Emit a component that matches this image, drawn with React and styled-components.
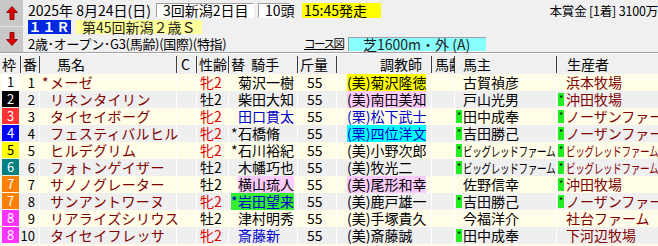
import React from "react";
import styled, { createGlobalStyle } from "styled-components";

const GlobalStyle = createGlobalStyle`
  body {
    margin: 0;
    background: #f0f0f0;
    font-family: "Noto Sans CJK JP", "Noto Sans", sans-serif;
    color: #000;
  }
`;

const COLS = "21px 19px 137px 20px 32px 69px 39px 95px 23px 102px 101px";

const FRAME = {
  1: ["#ffffff", "#000"],
  2: ["#000000", "#fff"],
  3: ["#ff3333", "#fff"],
  4: ["#0000ff", "#fff"],
  5: ["#ffff00", "#000"],
  6: ["#008080", "#fff"],
  7: ["#ff8000", "#fff"],
  8: ["#ff33ff", "#fff"],
};

const BIG = "ビッグレッドファーム";

const horses = [
  { f: 1, n: 1, name: "メーゼ", mark: true, sex: "牝2", jockey: "菊沢一樹", trainer: "(美)菊沢隆徳", tbg: "#ffff00", owner: "古賀禎彦", breeder: "浜本牧場" },
  { f: 2, n: 2, name: "リネンタイリン", sex: "牡2", jockey: "柴田大知", trainer: "(美)南田美知", tbg: "#ffccff", owner: "戸山光男", breeder: "沖田牧場", bm: true },
  { f: 3, n: 3, name: "タイセイボーグ", sex: "牝2", jockey: "田口貫太", jc: "#0000cc", trainer: "(栗)松下武士", owner: "田中成奉", om: true, breeder: "ノーザンファーム", bm: true },
  { f: 4, n: 4, name: "フェスティバルヒル", sex: "牝2", jockey: "石橋脩", jm: true, trainer: "(栗)四位洋文", tbg: "#00ffff", owner: "吉田勝己", om: true, breeder: "ノーザンファーム", bm: true },
  { f: 5, n: 5, name: "ヒルデグリム", sex: "牝2", jockey: "石川裕紀", jm: true, trainer: "(美)小野次郎", owner: BIG, om: true, breeder: BIG, bm: true },
  { f: 6, n: 6, name: "フォトンゲイザー", sex: "牡2", jockey: "木幡巧也", trainer: "(美)牧光二", owner: BIG, om: true, breeder: BIG, bm: true },
  { f: 7, n: 7, name: "サノノグレーター", sex: "牡2", jockey: "横山琉人", jbg: "#ffccff", trainer: "(美)尾形和幸", tbg: "#ffccff", owner: "佐野信幸", breeder: "沖田牧場", bm: true },
  { f: 7, n: 8, name: "サンアントワーヌ", sex: "牝2", jockey: "岩田望来", jm: true, jbg: "#33ee33", jc: "#0000cc", trainer: "(美)鹿戸雄一", owner: "吉田勝己", om: true, breeder: "ノーザンファーム", bm: true },
  { f: 8, n: 9, name: "リアライズシリウス", sex: "牡2", jockey: "津村明秀", trainer: "(美)手塚貴久", owner: "今福洋介", breeder: "社台ファーム" },
  { f: 8, n: 10, name: "タイセイフレッサ", sex: "牝2", jockey: "斎藤新", jc: "#0000cc", trainer: "(美)斎藤誠", owner: "田中成奉", om: true, breeder: "下河辺牧場" },
];

const ArrowUp = () => (
  <svg width="12" height="14" viewBox="0 0 12 14">
    <polygon points="6,0.5 11.5,6.5 8,6.5 8,13.5 4,13.5 4,6.5 0.5,6.5" fill="#e00000" stroke="#7a0000" strokeWidth="0.8" />
  </svg>
);

const ArrowDown = () => (
  <svg width="12" height="14" viewBox="0 0 12 14">
    <polygon points="6,13.5 11.5,7.5 8,7.5 8,0.5 4,0.5 4,7.5 0.5,7.5" fill="#e00000" stroke="#7a0000" strokeWidth="0.8" />
  </svg>
);

const App = () => {
  return (
    <Page>
      <GlobalStyle />
      <Top>
        <Arrows>
          <ArrowBtn>
            <ArrowUp />
          </ArrowBtn>
          <ArrowBtn>
            <ArrowDown />
          </ArrowBtn>
        </Arrows>
        <Info>
          <InfoRow>
            <DateText>2025年 8月24日(日)</DateText>
            <Field w={98}>3回新潟2日目</Field>
            <Field w={32}>10頭</Field>
            <Post>15:45発走</Post>
            <Prize>本賞金 [1着] 3100万</Prize>
          </InfoRow>
          <InfoRow>
            <RaceNo>１１Ｒ</RaceNo>
            <RaceName>第45回新潟２歳Ｓ</RaceName>
          </InfoRow>
          <InfoRow>
            <Conditions>2歳･オープン･G3(馬齢)(国際)(特指)</Conditions>
            <CourseLink>コース図</CourseLink>
            <CourseBox>芝1600m・外 (A)</CourseBox>
          </InfoRow>
        </Info>
      </Top>

      <Header>
        <HeadCell pl={2}>枠</HeadCell>
        <HeadCell pl={2}>番</HeadCell>
        <HeadCell pl={17}>馬名</HeadCell>
        <HeadCell pl={4}>C</HeadCell>
        <HeadCell pl={2}>性齢</HeadCell>
        <HeadCell pl={2}>替&nbsp;&nbsp;騎手</HeadCell>
        <HeadCell pl={2}>斤量</HeadCell>
        <HeadCell pl={43}>調教師</HeadCell>
        <HeadCell pl={3} clip>馬齢</HeadCell>
        <HeadCell pl={8}>馬主</HeadCell>
        <HeadCell pl={10} last>生産者</HeadCell>
      </Header>

      {horses.map((h, i) => (
        <Row key={h.n} odd={i % 2 === 0}>
          <FrameCell>
            <FrameBox bg={FRAME[h.f][0]} fg={FRAME[h.f][1]}>{h.f}</FrameBox>
          </FrameCell>
          <NumCell>{h.n}</NumCell>
          <NameCell>
            <Slot w={8}>{h.mark ? "*" : ""}</Slot>
            {h.name}
          </NameCell>
          <Cell />
          <SexCell female={h.sex === "牝2"}>{h.sex}</SexCell>
          <Cell pl={2}>
            {!h.jm && <Slot w={7} />}
            <Tag bg={h.jbg} fg={h.jc}>
              {h.jm && <Slot w={7}>*</Slot>}
              {h.jockey}
            </Tag>
          </Cell>
          <Cell pl={9}>55</Cell>
          <Cell pl={10}>
            <Tag bg={h.tbg} fg={h.trainer.startsWith("(栗)") ? "#0000cc" : undefined}>
              {h.trainer}
            </Tag>
          </Cell>
          <Cell />
          <Cell pl={1} clip>
            <Slot w={7}>{h.om && <Star>*</Star>}</Slot>
            {h.owner === BIG ? <Narrow>{h.owner}</Narrow> : h.owner}
          </Cell>
          <BreederCell clip>
            <Slot w={8}>{h.bm && <Star>*</Star>}</Slot>
            {h.breeder === BIG ? <Narrow>{h.breeder}</Narrow> : h.breeder}
          </BreederCell>
        </Row>
      ))}
    </Page>
  );
};

const Page = styled.div`
  width: 658px;
  height: 246px;
  overflow: hidden;
  background: #fffce8;
`;

const Top = styled.div`
  display: flex;
  height: 52px;
  background: #f0f0f0;
  border-bottom: 1px solid #a0a0a0;
`;

const Arrows = styled.div`
  width: 23px;
  flex-shrink: 0;
  display: flex;
  flex-direction: column;
  background: #c8c8c8;
`;

const ArrowBtn = styled.div`
  flex: 1;
  display: flex;
  align-items: center;
  justify-content: center;
  border-bottom: 1px solid #e4e4e4;
  &:last-child {
    border-bottom: none;
  }
`;

const Info = styled.div`
  flex: 1;
  min-width: 0;
  padding: 2px 0 0 5px;
  display: flex;
  flex-direction: column;
`;

const InfoRow = styled.div`
  height: 17px;
  display: flex;
  align-items: center;
  font-size: 14px;
  line-height: 15px;
  white-space: nowrap;
  & > * {
    flex-shrink: 0;
  }
`;

const DateText = styled.span`
  width: 128px;
`;

const Field = styled.span`
  box-sizing: border-box;
  width: ${(p) => p.w}px;
  height: 15px;
  margin-right: 4px;
  padding-left: 6px;
  background: #fff;
  border: 1px solid;
  border-color: #a0a0a0 #fff #fff #a0a0a0;
  line-height: 13px;
`;

const Post = styled.span`
  width: 79px;
  height: 15px;
  margin-left: 8px;
  padding-left: 2px;
  box-sizing: border-box;
  background: #ffff00;
`;

const Prize = styled.span`
  margin-left: auto;
  font-size: 12.5px;
  letter-spacing: -0.2px;
`;

const RaceNo = styled.span`
  width: 43px;
  height: 14px;
  line-height: 14px;
  background: #0028e0;
  color: #fff;
  font-weight: bold;
  font-size: 13px;
  letter-spacing: 1px;
  text-align: center;
`;

const RaceName = styled.span`
  width: 126px;
  height: 14px;
  line-height: 14px;
  margin-left: 5px;
  padding-left: 6px;
  box-sizing: border-box;
  background: #ffff99;
  color: #222;
`;

const Conditions = styled.span`
  width: 276px;
  font-size: 13px;
  letter-spacing: -0.3px;
`;

const CourseLink = styled.span`
  text-decoration: underline;
  width: 44px;
  font-size: 11.5px;
  letter-spacing: -1.5px;
`;

const CourseBox = styled.span`
  box-sizing: border-box;
  width: 138px;
  height: 14px;
  line-height: 13px;
  padding-left: 14px;
  background: #88ffff;
  border-left: 1px solid #a0a0a0;
  border-top: 1px solid #a0a0a0;
  color: #222;
`;

const Header = styled.div`
  display: grid;
  grid-template-columns: ${COLS};
  height: 21px;
  border-top: 1px solid #fff;
  background: #f0f0f0;
  box-sizing: border-box;
`;

const HeadCell = styled.div`
  padding-left: ${(p) => p.pl}px;
  margin: 2px 0 1px;
  font-size: 14px;
  line-height: 17px;
  white-space: nowrap;
  overflow: ${(p) => (p.clip ? "hidden" : "visible")};
  border-right: ${(p) => (p.last ? "none" : "1px solid #404040")};
`;

const Row = styled.div`
  display: grid;
  grid-template-columns: ${COLS};
  height: 17px;
  background: ${(p) => (p.odd ? "#fffce8" : "#efefef")};
  font-size: 14px;
  line-height: 17px;
  white-space: nowrap;
`;

const Cell = styled.div`
  padding-left: ${(p) => p.pl || 0}px;
  border-right: 1px solid #fff;
  overflow: ${(p) => (p.clip ? "hidden" : "visible")};
  display: flex;
  align-items: center;
`;

const FrameCell = styled.div`
  padding-left: 2px;
`;

const FrameBox = styled.div`
  width: 17px;
  height: 16px;
  background: ${(p) => p.bg};
  color: ${(p) => p.fg};
  text-align: center;
  font-size: 13px;
  line-height: 16px;
`;

const NumCell = styled(Cell)`
  justify-content: flex-end;
  padding-right: 4px;
  font-size: 13px;
`;

const NameCell = styled(Cell)`
  padding-left: 2px;
  color: #800000;
  letter-spacing: 0.4px;
`;

const SexCell = styled(Cell)`
  padding-left: 3px;
  color: ${(p) => (p.female ? "#e00000" : "#000")};
`;

const BreederCell = styled(Cell)`
  padding-left: 1px;
  color: #800000;
  border-right: none;
`;

const Slot = styled.span`
  display: inline-block;
  width: ${(p) => p.w}px;
  flex-shrink: 0;
`;

const Tag = styled.span`
  display: inline-flex;
  align-items: center;
  height: 17px;
  background: ${(p) => p.bg || "transparent"};
  color: ${(p) => p.fg || "inherit"};
`;

const Star = styled.span`
  display: inline-block;
  width: 6px;
  height: 13px;
  margin-top: 2px;
  background: #22ee22;
  color: #000;
  font-size: 9px;
  line-height: 11px;
  text-align: center;
  vertical-align: top;
`;

const Narrow = styled.span`
  display: inline-block;
  font-size: 13px;
  letter-spacing: -0.5px;
  transform: scaleX(0.74);
  transform-origin: left center;
`;

export default App;
